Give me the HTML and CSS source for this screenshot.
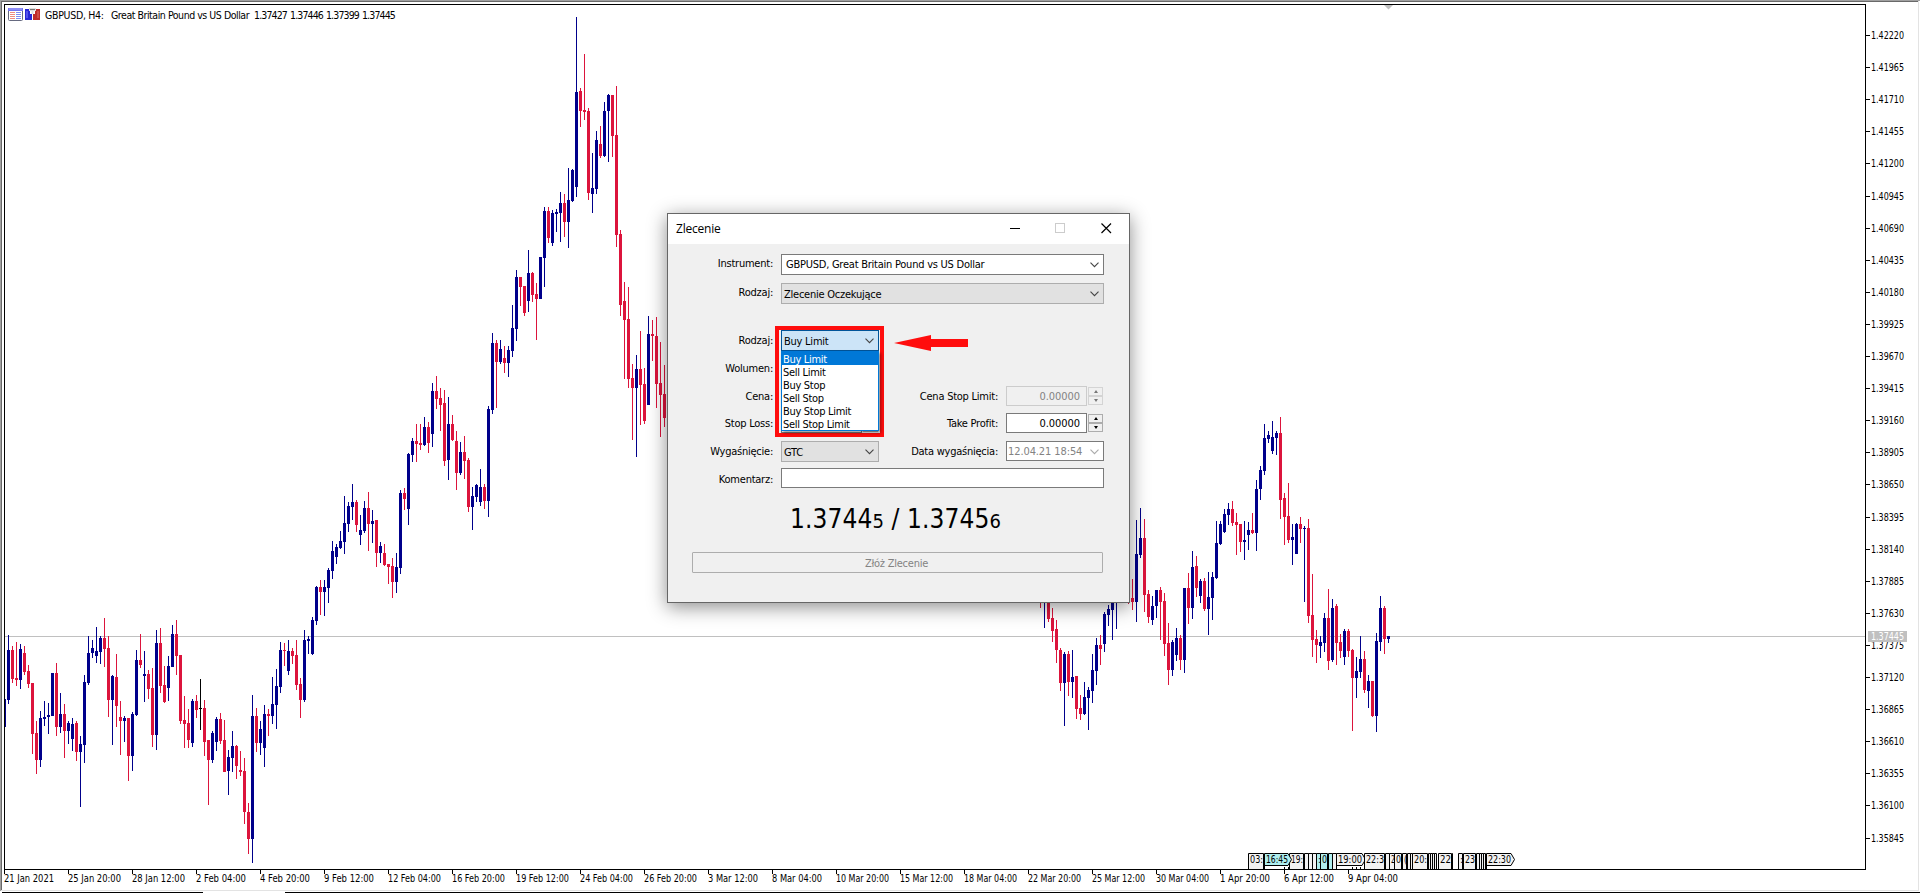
FILE: index.html
```html
<!DOCTYPE html>
<html lang="pl">

<head>
    <meta charset="UTF-8">
    <meta name="viewport" content="width=device-width, initial-scale=1.0">
    <title>GBPUSD, H4</title>
    <link rel="stylesheet" href="styles.css">
</head>

<body>

    <div class="chart-window">
        <svg id="chart" class="chart" width="1920" height="893" viewBox="0 0 1920 893"></svg>

        <div class="chart-header">
            <svg width="15" height="13" viewBox="0 0 15 13">
                <rect x="0.5" y="0.5" width="14" height="12" rx="1" fill="#fff" stroke="#666a80" />
                <path d="M0 0H15V3H0z" fill="#7474ee" />
                <path d="M1 1H14" stroke="#a9a9ff" />
                <path d="M2 4.5H7M2 6.5H7M2 8.5H7M2 10.5H7" stroke="#ee8b80" />
                <path d="M8 4.5H13M8 6.5H13M8 8.5H13M8 10.5H13" stroke="#7c8cf2" />
            </svg>
            <svg width="15" height="13" viewBox="0 0 15 13">
                <path d="M0 1H5V6H7V12H0z" fill="#2626d6" />
                <path d="M10 1H15V12H8V6H10z" fill="#bd2b2b" />
                <path d="M2 3V10" stroke="#7d7dff" />
                <path d="M13 3V10" stroke="#e06a6a" />
                <path d="M4 0H11V3H8.500V6H6.500V3H4z" fill="#ddd" />
                <path d="M5 1.500H10" stroke="#777" />
            </svg>
            <span class="symbol">GBPUSD, H4:</span>
            <span class="symbol-name">Great Britain Pound vs US Dollar</span>
            <span class="ohlc">1.37427 1.37446 1.37399 1.37445</span>
        </div>
    </div>

    <!-- Order window -->
    <div class="dialog">
        <div class="titlebar">
            <span class="title">Zlecenie</span>
            <svg width="102" height="11" viewBox="0 0 102 11">
                <path d="M0 5.500H10" stroke="#000" />
                <rect x="45.500" y="0.500" width="9" height="9" fill="none" stroke="#ccc" />
                <path d="M91.500 0.500L101 10M101 0.500L91.500 10" stroke="#000" stroke-width="1.200" />
            </svg>
        </div>

        <div class="form">
            <label class="top">Instrument:</label>
            <div class="select wide editable"><span>GBPUSD, Great Britain Pound vs US Dollar</span><svg class="chevron" viewBox="0 0 9 6"><path d="M0.500 0.700L4.500 4.700L8.500 0.700" /></svg></div>

            <label class="top">Rodzaj:</label>
            <div class="select wide"><span>Zlecenie Oczekujące</span><svg class="chevron" viewBox="0 0 9 6"><path d="M0.500 0.700L4.500 4.700L8.500 0.700" /></svg></div>

            <label>Rodzaj:</label>
            <div class="select open">
                <span>Buy Limit</span><svg class="chevron" viewBox="0 0 9 6"><path d="M0.500 0.700L4.500 4.700L8.500 0.700" /></svg>
                <ul class="options">
                    <li class="selected">Buy Limit</li>
                    <li>Sell Limit</li>
                    <li>Buy Stop</li>
                    <li>Sell Stop</li>
                    <li>Buy Stop Limit</li>
                    <li>Sell Stop Limit</li>
                </ul>
            </div>

            <label class="first">Wolumen:</label>
            <div class="input"></div>

            <label class="first">Cena:</label>
            <div class="number">
                <div class="input"></div>
                <div class="spinner"><i class="up"></i><i class="down"></i></div>
            </div>
            <label>Cena Stop Limit:</label>
            <div class="number disabled">
                <div class="input">0.00000</div>
                <div class="spinner"><i class="up"></i><i class="down"></i></div>
            </div>

            <label>Stop Loss:</label>
            <div class="number">
                <div class="input"></div>
                <div class="spinner"><i class="up"></i><i class="down"></i></div>
            </div>
            <label>Take Profit:</label>
            <div class="number">
                <div class="input">0.00000</div>
                <div class="spinner"><i class="up"></i><i class="down"></i></div>
            </div>

            <label>Wygaśnięcie:</label>
            <div class="select"><span>GTC</span><svg class="chevron" viewBox="0 0 9 6"><path d="M0.500 0.700L4.500 4.700L8.500 0.700" /></svg></div>
            <label>Data wygaśnięcia:</label>
            <div class="select date"><span>12.04.21 18:54</span><svg class="chevron" viewBox="0 0 9 6"><path d="M0.500 0.700L4.500 4.700L8.500 0.700" /></svg></div>

            <label class="comment">Komentarz:</label>
            <div class="input wide"></div>
        </div>

        <div class="quote">1.3744<small>5</small> / 1.3745<small>6</small></div>
        <button class="submit" disabled>Złóż Zlecenie</button>
    </div>

    <!-- Annotations -->
    <div class="highlight"></div>
    <svg class="arrow" width="75" height="17" viewBox="0 0 75 17">
        <path d="M0 8L37 0V4H74V12H37V16z" fill="#ff0d0d" />
    </svg>

    <script src="chart.js"></script>
</body>

</html>
```
FILE: styles.css
```css
* {
    box-sizing: border-box;
}

body {
    margin: 0;
    width: 1920px;
    height: 893px;
    overflow: hidden;
    position: relative;
    background: #fff;
    color: #000;
    font-family: "DejaVu Sans Condensed", "DejaVu Sans", sans-serif;
    font-stretch: condensed;
    font-size: 11px;
    letter-spacing: -0.24px;
}

.chart-window {
    width: 1920px;
    height: 893px;
}

.chart {
    display: block;
}

.chart text {
    font-size: 10.5px;
    letter-spacing: 0;
}

/* Title line lies over the chart */
.chart-header {
    position: absolute;
    left: 8px;
    top: 7px;
    height: 15px;
    display: flex;
    align-items: center;
    gap: 2px;
    font-size: 10.5px;
    white-space: nowrap;
}

.symbol {
    margin-left: 3px;
    width: 64px;
    letter-spacing: -0.3px;
}

.symbol-name {
    width: 141px;
    letter-spacing: -0.46px;
}

.ohlc {
    letter-spacing: -0.87px;
    word-spacing: 0.9px;
}

/* Order window */
.dialog {
    position: absolute;
    left: 667px;
    top: 213px;
    width: 463px;
    height: 390px;
    border: 1px solid #666;
    background: #f0f0f0;
    box-shadow: 0 4px 18px rgba(0, 0, 0, 0.45);
}

.titlebar {
    height: 30px;
    padding: 0 17px 2px 8px;
    display: flex;
    align-items: center;
    justify-content: space-between;
    background: #fff;
}

.title {
    font-family: "Open Sans", sans-serif;
    font-stretch: normal;
    font-size: 12px;
    letter-spacing: -0.2px;
}

.form {
    display: grid;
    grid-template-columns: 113px 98px 127px 98px;
    grid-template-rows: 29px 47px 28px 28px 27px 28px 27px 20px;
    align-items: start;
    padding-top: 10px;
}

.form label {
    padding-right: 8px;
    line-height: 21px;
    text-align: right;
    white-space: nowrap;
}

.form .top {
    line-height: 19px;
}

.form .comment {
    line-height: 23px;
    height: 20px;
}

.form .first {
    grid-column: 1;
}

.wide {
    grid-column: 2 / 5;
}

.select {
    position: relative;
    height: 21px;
    padding: 1px 4px 0 2px;
    display: flex;
    align-items: center;
    justify-content: space-between;
    border: 1px solid #adadad;
    background: #e1e1e1;
    white-space: nowrap;
}

.editable {
    padding-top: 0;
    padding-left: 4px;
    border-color: #7a7a7a;
    background: #fff;
}

.date {
    height: 20px;
    padding-left: 1px;
    border-color: #7a7a7a;
    background: #fff;
    color: #838383;
    letter-spacing: -0.1px;
}

.date .chevron {
    stroke: #aaa;
}

.chevron {
    width: 9px;
    height: 6px;
    fill: none;
    stroke: #444;
    stroke-width: 1.1;
}

.open {
    border-color: #005499;
    background: #cce4f7;
}

.options {
    position: absolute;
    left: -1px;
    top: 20px;
    width: 98px;
    margin: 0;
    padding: 0;
    list-style: none;
    border: 1px solid #0078d7;
    background: #fff;
    box-shadow: 2px 2px 3px rgba(0, 0, 0, 0.4);
    z-index: 1;
}

.options li {
    height: 13px;
    padding-left: 1px;
    line-height: 15px;
    letter-spacing: -0.3px;
}

.options .selected {
    background: #0078d7;
    color: #fff;
}

.input {
    height: 20px;
    border: 1px solid #7a7a7a;
    background: #fff;
}

.number {
    display: flex;
    gap: 1px;
}

.number .input {
    width: 81px;
    padding-right: 6px;
    line-height: 19px;
    text-align: right;
    letter-spacing: -0.05px;
}

.spinner {
    display: flex;
    flex-direction: column;
    padding: 1px 0;
}

.spinner i {
    width: 15px;
    height: 9px;
    border: 1px solid #adadad;
    background: #f0f0f0;
    display: flex;
    align-items: center;
    justify-content: center;
}

.spinner i::before {
    content: "";
    border: 2.5px solid transparent;
}

.spinner .up::before {
    border-top-width: 0;
    border-bottom: 3px solid #000;
}

.spinner .down::before {
    border-bottom-width: 0;
    border-top: 3px solid #000;
}

.disabled .input {
    border: 1px solid #ccc;
    background: #f0f0f0;
    color: #838383;
}

.disabled .spinner i {
    border-color: #d4d4d4;
}

.disabled .spinner .up::before {
    border-bottom-color: #777;
}

.disabled .spinner .down::before {
    border-top-color: #777;
}

.quote {
    margin: 13px 0 0 122px;
    height: 36px;
    line-height: 36px;
    font-size: 26px;
    letter-spacing: 0.1px;
    white-space: nowrap;
}

.quote small {
    font-size: 20px;
}

.submit {
    display: block;
    width: 411px;
    height: 21px;
    margin: 15px 0 0 24px;
    padding: 1px 2px 0 0;
    border: 1px solid #adadad;
    border-radius: 1px;
    background: #f0f0f0;
    color: #838383;
    font: inherit;
    letter-spacing: inherit;
}

/* Marks drawn over the window */
.highlight {
    position: absolute;
    left: 775px;
    top: 326px;
    width: 109px;
    height: 111px;
    border: 4px solid #ff0d0d;
}

.arrow {
    position: absolute;
    left: 894px;
    top: 335px;
}
```
FILE: chart.js
```js
const NS = 'http://www.w3.org/2000/svg';
const chart = document.getElementById('chart');

// Bar groups: first bar index, then "colour high top bottom low"
const groups = [
    [0, `b 699 699 727 727,b 635 650 700 704,r 646 650 679 683,r 642 678 680 686,b 644 649 680 689,r 646 653 672 675,
    r 665 671 684 688,r 683 683 734 754,r 721 733 760 774,b 711 718 760 767,b 701 717 719 726,b 703 715 717 734,
    b 673 673 716 716,r 663 673 727 736,b 693 714 727 733,r 704 714 731 758,b 721 723 731 744,b 718 724 739 751,
    r 721 723 752 761,b 736 744 752 807,b 675 682 745 763,b 636 653 683 685,b 640 648 653 658,b 627 651 656 663,
    b 636 638 652 664,r 618 638 649 667,r 636 648 700 717,b 675 676 700 745,r 654 677 706 727,r 701 717 721 755,
    b 716 718 721 742,r 718 718 756 781,b 712 714 756 771,b 650 660 715 716,r 634 660 665 668,b 651 674 676 702,
    r 670 674 689 699,r 668 688 735 747,b 630 643 735 750,r 628 643 686 693,r 666 685 702 703,b 656 666 688 701,
    b 625 634 667 667,r 620 634 656 675,r 655 655 721 724,r 696 720 724 748,r 709 723 740 748,b 699 701 743 747,
    r 695 701 710 718,k 679 708 709 730,r 700 708 742 756,r 740 740 760 805,b 731 733 760 763,b 717 719 742 751,
    r 713 719 741 744,r 720 740 772 772,b 750 757 771 795,b 731 746 758 772,r 745 746 766 779,r 751 770 772 776,
    r 758 771 812 824,r 803 812 839 854,b 695 716 839 863,r 708 716 743 752,b 721 729 743 755,b 705 714 748 767,
    r 709 714 716 736,b 677 704 716 724,b 669 686 705 729,b 642 650 687 693,r 643 650 651 666,b 640 651 671 675,
    r 648 651 656 664,r 640 655 685 690,r 678 684 700 718,b 630 640 700 702,b 636 639 641 654,b 617 620 654 655,
    b 586 587 621 625,r 580 587 592 615,b 580 587 592 616,b 568 570 588 603,b 541 551 571 579,b 544 547 557 564,
    b 531 541 548 549,b 496 523 542 554,b 502 506 524 532,b 484 502 507 520,r 500 502 525 532,b 515 530 535 545,
    b 501 508 531 533,r 492 508 524 551,b 510 521 524 543,r 520 520 553 567,b 542 546 553 563,r 544 553 565 566,
    r 564 564 567 584,r 558 566 582 598,b 553 567 582 593,b 490 493 568 574,r 488 493 499 510,b 453 454 509 525,
    b 438 441 455 462,r 424 441 444 462,r 424 443 445 450,b 417 427 445 446,r 422 427 443 453,b 383 391 434 447,
    r 376 391 399 409,r 388 398 405 431,r 390 403 461 466,b 397 424 460 480,r 415 424 440 441,r 431 441 473 490,
    b 442 452 473 475,r 436 452 461 479,r 458 460 507 512,b 487 496 507 530,b 484 485 497 502,b 469 487 502 506,
    r 484 487 501 509,b 406 409 501 517,b 333 343 410 414,r 340 343 362 408,b 340 349 362 364,r 346 358 363 373,
    b 346 350 363 377,b 305 328 351 357,b 270 277 329 341,r 277 277 287 306,r 286 286 313 316,b 250 273 301 312,
    r 272 273 295 302,r 283 294 299 340,b 257 257 299 299,b 207 211 258 287,r 207 211 238 243,b 210 213 243 246,
    b 209 212 214 232,b 192 203 213 242,r 194 203 222 237,b 168 200 222 248,b 169 170 201 202,b 17 92 187 197,
    r 88 91 111 127,r 54 110 112 120,r 108 111 193 200,b 153 188 194 213,b 131 140 189 194,r 126 144 156 158,
    b 102 111 156 157,b 94 95 111 162,r 95 95 136 157,r 86 135 235 247,r 230 234 305 316,r 282 301 320 379,
    r 287 319 379 388,r 364 378 388 440,b 355 369 388 457,r 331 369 385 425,r 368 384 421 424,b 316 334 405 405,
    r 320 334 336 361,r 317 336 384 408,r 342 383 395 437,r 365 394 418 427,b 408 408 418 418`],
    [259, `r 580 582 590 608,b 580 582 590 628,r 590 590 619 622,r 608 618 631 642,r 620 629 650 663,r 648 650 683 691,
    b 652 654 683 726,r 651 654 682 696,b 650 677 682 698,r 676 676 709 719,r 695 708 714 720,b 682 697 714 715,
    b 687 690 698 730,b 654 670 691 703,b 638 645 671 685,r 635 645 649 665,b 612 614 644 652,b 605 609 615 626,
    b 590 590 610 640,b 590 590 600 629`],
    [281, `r 585 588 598 604,r 579 598 602 610,b 520 554 602 622,b 508 538 555 558,r 519 538 595 612,r 590 594 617 623,
    b 596 606 620 625,b 590 590 606 618,r 587 590 602 640,r 593 601 644 656,r 623 643 670 685,b 640 642 670 676,
    b 628 638 655 661,r 635 638 660 670,b 588 588 660 673,r 573 588 608 624,b 551 567 608 619,r 556 566 588 597,
    b 579 581 596 603,r 578 581 609 611,b 572 597 609 635,b 572 577 598 620,b 521 543 578 579,b 521 524 544 545,
    b 509 514 532 533,b 503 509 515 525,r 501 509 523 526,r 513 522 525 555,r 524 524 542 552,b 521 540 542 560,
    b 522 530 535 550,r 513 530 533 534,b 480 489 533 551,b 466 470 489 500,b 424 438 471 475,b 431 435 439 443,
    b 421 437 451 454,b 431 433 438 455,r 417 433 500 519,r 493 498 517 545,r 483 516 540 543,b 524 537 540 565,
    b 523 524 554 554,r 517 524 529 543,b 526 528 529 602,r 519 528 616 623,r 574 615 640 657,r 630 639 645 663,
    b 636 642 646 658,b 613 618 643 652,r 589 618 661 670,b 599 608 660 662,r 604 606 643 665,r 634 642 651 658,
    b 629 631 657 665,r 629 631 651 657,r 649 650 678 731,b 657 671 678 698,b 636 659 672 678,r 651 659 690 693,
    b 675 681 691 708,r 681 681 716 717,b 633 641 716 732,b 596 608 642 651,r 606 608 639 654,b 636 636 639 643`]
];

const colors = { b: '#00008b', r: '#dc143c', k: '#000' };

const times = ['21 Jan 2021', '25 Jan 20:00', '28 Jan 12:00', '2 Feb 04:00', '4 Feb 20:00', '9 Feb 12:00',
    '12 Feb 04:00', '16 Feb 20:00', '19 Feb 12:00', '24 Feb 04:00', '26 Feb 20:00', '3 Mar 12:00', '8 Mar 04:00',
    '10 Mar 20:00', '15 Mar 12:00', '18 Mar 04:00', '22 Mar 20:00', '25 Mar 12:00', '30 Mar 04:00', '1 Apr 20:00',
    '6 Apr 12:00', '9 Apr 04:00'];

function add(name, attrs, text) {
    const el = document.createElementNS(NS, name);
    Object.entries(attrs).forEach(([key, value]) => el.setAttribute(key, value));
    if (text) el.textContent = text;
    chart.appendChild(el);
    return el;
}

function rect(x, y, width, height, fill) {
    add('rect', { x, y, width, height, fill });
}

// length fixes the drawn width of the label
function label(x, y, text, length, fill = '#000') {
    add('text', { x, y, fill, textLength: length, lengthAdjust: 'spacingAndGlyphs' }, text);
}

function drawFrame() {
    rect(0, 0, 1920, 1, '#a0a0a0');
    rect(0, 1, 1918, 1, '#696969');
    rect(0, 0, 1, 891, '#a0a0a0');
    rect(1, 1, 1, 889, '#696969');
    rect(1918, 1, 1, 890, '#e3e3e3');
    rect(1, 890, 1918, 1, '#e3e3e3');
    rect(2, 892, 201, 1, '#000');
    rect(285, 892, 1635, 1, '#000');
    // Current price
    rect(5, 636, 1860, 1, '#c0c0c0');
    add('path', { d: 'M1384 5H1393L1388.5 9.5z', fill: '#c0c0c0' });
}

function drawCandles() {
    groups.forEach(([first, bars]) => {
        bars.split(',').forEach((bar, i) => {
            const [color, ...values] = bar.trim().split(' ');
            const [high, top, bottom, low] = values.map(Number);
            const x = 4 + (first + i) * 4;
            rect(x, high, 1, low - high, colors[color]);
            rect(x - 1, top, 3, bottom - top, colors[color]);
        });
    });
}

function drawAxes() {
    rect(2, 690, 2, 50, '#fff');
    rect(4, 4, 1, 870, '#000');
    rect(4, 4, 1862, 1, '#000');
    rect(1865, 4, 1, 866, '#000');
    rect(4, 869, 1862, 1, '#000');

    for (let i = 0; i <= 25; i++) {
        const y = Math.round(35 + i * 32.1);
        rect(1866, y, 4, 1, '#000');
        label(1871, y + 4, (1.4222 - i * 0.00255).toFixed(5), 33);
    }
    rect(1868, 631, 39, 11, '#c0c0c0');
    label(1871, 640, '1.37445', 33, '#fff');

    times.forEach((time, i) => {
        rect(4 + i * 64, 870, 1, 4, '#000');
        label(4 + i * 64, 882, time, time.length === 12 ? 53 : 50);
    });
}

// Economic calendar flags along the time axis: x, width, text, fill, arrow
function drawEvents() {
    const gray = '#f2f2f2';
    const cyan = '#afeeee';
    const flags = [
        [1248, 15, '03:', gray], [1289, 14, '19:', gray], [1264, 24, '16:45', cyan, true],
        [1304, 4, '', gray], [1308, 4, '', gray], [1312, 4, '', gray], [1316, 4, ':', cyan], [1320, 7, '0', cyan],
        [1328, 4, '', cyan], [1332, 4, '', gray], [1336, 26, '19:00', gray, true],
        [1364, 20, '22:3', gray], [1385, 4, '', gray], [1389, 5, '2', gray], [1394, 7, '0', gray], [1402, 4, '(', gray],
        [1407, 3, '', gray], [1410, 2, '', gray], [1412, 15, '20:', gray], [1428, 2, '', gray], [1430, 2, '', gray],
        [1432, 2, '', gray], [1434, 2, '', gray], [1438, 13, '22', gray], [1452, 0, '', gray], [1458, 4, ':', gray],
        [1463, 12, '23', gray], [1476, 3, '', gray], [1479, 2, '', gray], [1481, 2, '', gray], [1483, 2, '', gray],
        [1486, 25, '22:30', gray, true]
    ];
    flags.forEach(([x, w, text, fill, arrow]) => {
        const d = arrow
            ? `M${x + .5} 869V853.5H${x + w}L${x + w + 3.5} 859.5L${x + w} 865.5H${x + .5}`
            : `M${x + .5} 869V853.5H${x + w + .5}V869`;
        add('path', { d, fill, stroke: '#000' });
        if (text) label(x + 2, 863, text, text.length === 1 ? Math.min(w, 6) - 1 : w - 2);
    });
    [1284, 1288, 1352, 1356, 1360].forEach(x => rect(x, 867, 1, 2, '#000'));
}

drawFrame();
drawCandles();
drawAxes();
drawEvents();
```
